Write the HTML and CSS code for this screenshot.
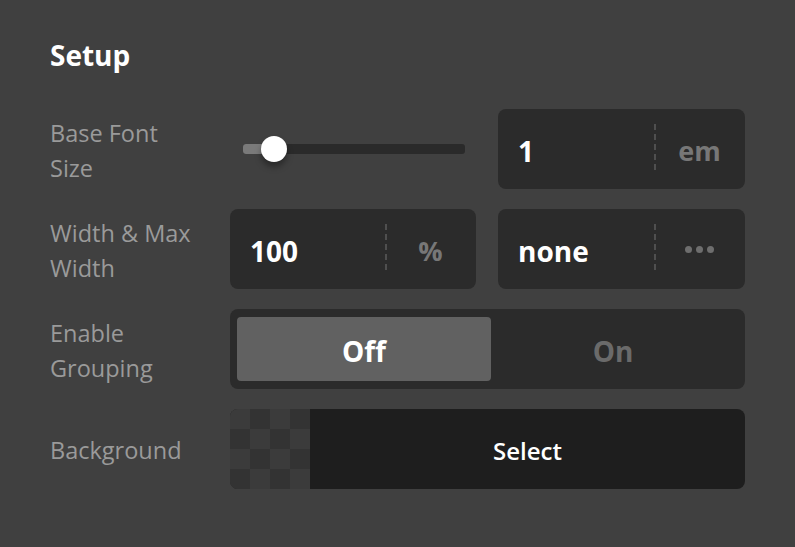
FILE: index.html
```html
<!DOCTYPE html>
<html>
<head lang="en">
    <meta charset="UTF-8">
    <title>Setup</title>
    <link rel="stylesheet" href="styles.css">
</head>
<body>
<div id="panel">
    <h2 class="title">Setup</h2>
    <div class="rows">
        <div class="row">
            <label class="label">Base Font<br>Size</label>
            <div class="slider">
                <div class="track">
                    <div class="fill"></div>
                    <div class="thumb"></div>
                </div>
            </div>
            <div class="field">
                <span class="value">1</span>
                <span class="unit">em</span>
            </div>
        </div>
        <div class="row">
            <label class="label">Width &amp; Max<br>Width</label>
            <div class="field">
                <span class="value">100</span>
                <span class="unit">%</span>
            </div>
            <div class="field">
                <span class="value">none</span>
                <span class="unit dots"><i></i><i></i><i></i></span>
            </div>
        </div>
        <div class="row">
            <label class="label">Enable<br>Grouping</label>
            <div class="toggle wide">
                <span class="opt selected">Off</span>
                <span class="opt">On</span>
            </div>
        </div>
        <div class="row">
            <label class="label">Background</label>
            <div class="bg-pick wide">
                <div class="checker"></div>
                <div class="select">Select</div>
            </div>
        </div>
    </div>
</div>
</body>
</html>
```

FILE: styles.css
```css
* {
    margin: 0;
    padding: 0;
    box-sizing: border-box;
}

html, body {
    height: 100%;
}

body {
    background-color: #404040;
    font-family: "Segoe UI", "Open Sans", "Noto Sans", sans-serif;
    color: #fff;
}

#panel {
    padding: 36px 50px 0 50px;
}

.title {
    font-size: 28px;
    font-weight: 700;
    line-height: 38px;
    margin-bottom: 35px;
}

.rows {
    display: flex;
    flex-direction: column;
    gap: 20px;
}

.row {
    display: grid;
    grid-template-columns: 158px 246px 247px;
    column-gap: 22px;
    height: 80px;
    align-items: center;
}

.label {
    color: #9a9a9a;
    font-size: 23.5px;
    line-height: 35px;
    padding-top: 3px;
    white-space: nowrap;
}

.wide {
    grid-column: 2 / 4;
}

/* slider */
.slider {
    padding: 0 11px 0 13px;
}

.track {
    position: relative;
    height: 10px;
    border-radius: 3px;
    background-color: #2a2a2a;
}

.fill {
    width: 32px;
    height: 100%;
    border-radius: 3px;
    background-color: #7a7a7a;
}

.thumb {
    position: absolute;
    left: 18px;
    top: -8px;
    width: 26px;
    height: 26px;
    border-radius: 50%;
    background-color: #fff;
    box-shadow: 0 5px 6px rgba(0, 0, 0, 0.35);
}

/* input with unit */
.field {
    display: flex;
    height: 80px;
    border-radius: 8px;
    background-color: #2b2b2b;
    align-items: center;
}

.value {
    flex: 1;
    padding: 3px 0 0 20px;
    font-size: 28px;
    font-weight: 700;
}

.unit {
    width: 91px;
    height: 50px;
    padding-top: 3px;
    background-image: repeating-linear-gradient(#4f4f4f 0 6px, transparent 6px 10px);
    background-size: 2px 100%;
    background-repeat: no-repeat;
    display: flex;
    align-items: center;
    justify-content: center;
    color: #777;
    font-size: 27px;
    font-weight: 700;
}

.dots {
    gap: 4px;
    padding-top: 0;
}

.dots i {
    width: 7px;
    height: 7px;
    border-radius: 50%;
    background-color: #6e6e6e;
}

/* toggle */
.toggle {
    display: grid;
    grid-template-columns: 1fr 1fr;
    height: 80px;
    padding: 8px 0 8px 7px;
    border-radius: 8px;
    background-color: #2b2b2b;
}

.opt {
    display: flex;
    align-items: center;
    justify-content: center;
    padding-top: 3px;
    padding-right: 10px;
    font-size: 28px;
    font-weight: 700;
    color: #6a6a6a;
}

.opt.selected {
    padding-right: 0;
    border-radius: 4px;
    background-color: #616161;
    color: #fff;
}

/* background picker */
.bg-pick {
    display: flex;
    height: 80px;
    border-radius: 8px;
    overflow: hidden;
    background-color: #1e1e1e;
}

.checker {
    width: 80px;
    background-color: #333;
    background-image: conic-gradient(#333 25%, #3b3b3b 0 50%, #333 0 75%, #3b3b3b 0);
    background-size: 40px 40px;
}

.select {
    flex: 1;
    display: flex;
    align-items: center;
    justify-content: center;
    padding-top: 2px;
    font-size: 24px;
    font-weight: 600;
}
```
